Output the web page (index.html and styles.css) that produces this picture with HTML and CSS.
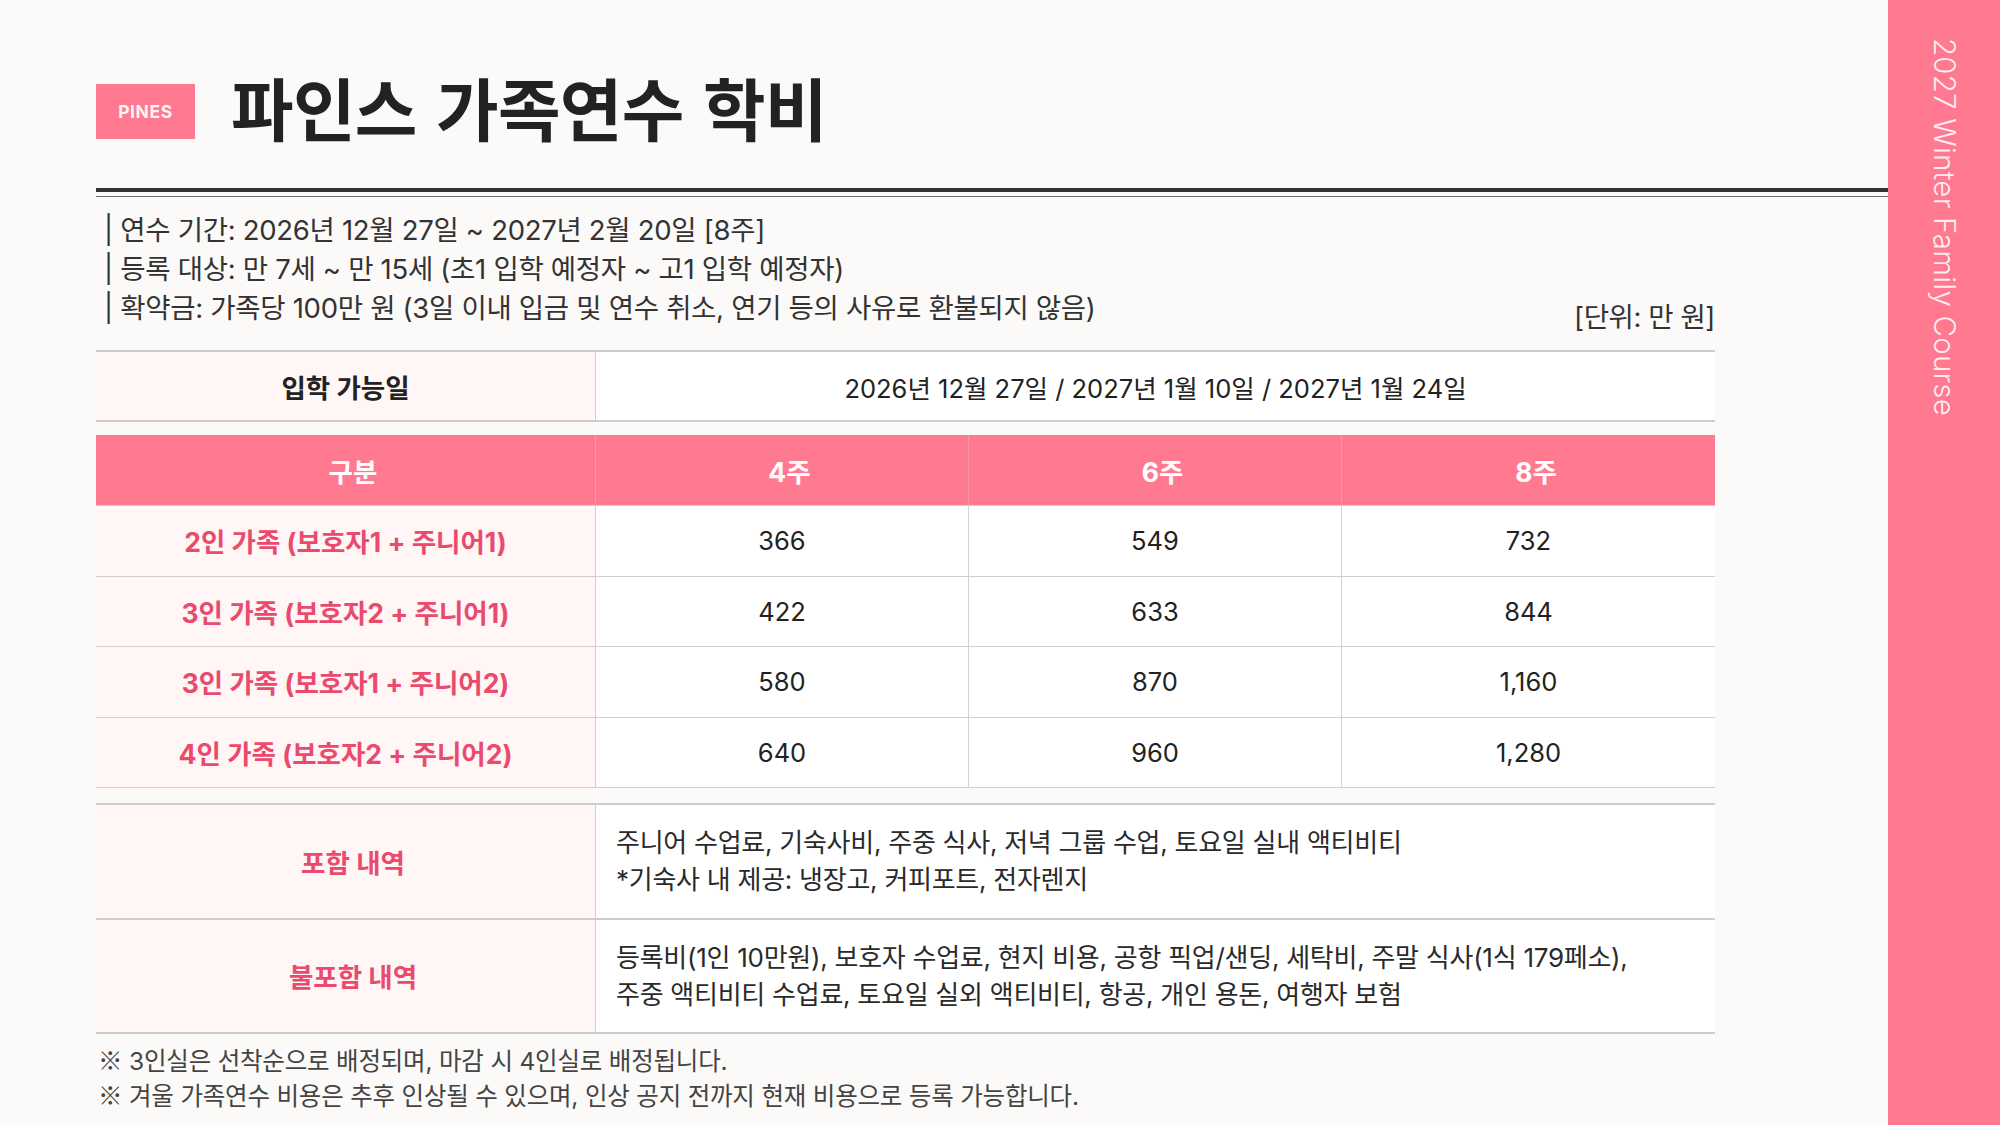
FILE: index.html
```html
<!DOCTYPE html>
<html lang="ko">
<head>
<meta charset="utf-8">
<title>파인스 가족연수 학비</title>
<link rel="stylesheet" href="styles.css">
</head>
<body>
<div class="page">
  <main class="main">
    <header class="head">
      <div class="badge">PINES</div>
      <h1 class="title">파인스 가족연수 학비</h1>
    </header>
    <div class="rule"></div>

    <div class="content">
      <div class="info">
        <ul class="info-list">
          <li>| 연수 기간: 2026년 12월 27일 ~ 2027년 2월 20일 [8주]</li>
          <li>| 등록 대상: 만 7세 ~ 만 15세 (초1 입학 예정자 ~ 고1 입학 예정자)</li>
          <li>| 확약금: 가족당 100만 원 (3일 이내 입금 및 연수 취소, 연기 등의 사유로 환불되지 않음)</li>
        </ul>
        <div class="unit">[단위: 만 원]</div>
      </div>

      <div class="tbl tbl-date">
        <div class="cell label dark">입학 가능일</div>
        <div class="cell val">2026년 12월 27일 / 2027년 1월 10일 / 2027년 1월 24일</div>
      </div>

      <div class="tbl tbl-price">
        <div class="cell th">구분</div>
        <div class="cell th">4주</div>
        <div class="cell th">6주</div>
        <div class="cell th">8주</div>

        <div class="cell label">2인 가족 (보호자1 + 주니어1)</div>
        <div class="cell num">366</div>
        <div class="cell num">549</div>
        <div class="cell num">732</div>

        <div class="cell label">3인 가족 (보호자2 + 주니어1)</div>
        <div class="cell num">422</div>
        <div class="cell num">633</div>
        <div class="cell num">844</div>

        <div class="cell label">3인 가족 (보호자1 + 주니어2)</div>
        <div class="cell num">580</div>
        <div class="cell num">870</div>
        <div class="cell num">1,160</div>

        <div class="cell label">4인 가족 (보호자2 + 주니어2)</div>
        <div class="cell num">640</div>
        <div class="cell num">960</div>
        <div class="cell num">1,280</div>
      </div>

      <div class="tbl tbl-incl">
        <div class="cell label">포함 내역</div>
        <div class="cell text">주니어 수업료, 기숙사비, 주중 식사, 저녁 그룹 수업, 토요일 실내 액티비티<br>*기숙사 내 제공: 냉장고, 커피포트, 전자렌지</div>
        <div class="cell label">불포함 내역</div>
        <div class="cell text">등록비(1인 10만원), 보호자 수업료, 현지 비용, 공항 픽업/샌딩, 세탁비, 주말 식사(1식 179페소),<br>주중 액티비티 수업료, 토요일 실외 액티비티, 항공, 개인 용돈, 여행자 보험</div>
      </div>

      <div class="notes">
        <p><span class="mark">※</span> 3인실은 선착순으로 배정되며, 마감 시 4인실로 배정됩니다.</p>
        <p><span class="mark">※</span> 겨울 가족연수 비용은 추후 인상될 수 있으며, 인상 공지 전까지 현재 비용으로 등록 가능합니다.</p>
      </div>
    </div>
  </main>

  <aside class="side">
    <span class="side-text">2027 Winter Family Course</span>
  </aside>
</div>
</body>
</html>
```

FILE: styles.css
```css
* {
  box-sizing: border-box;
}

html, body {
  margin: 0;
  padding: 0;
}

body {
  width: 2000px;
  height: 1125px;
  overflow: hidden;
  background: #fbfaf8;
  font-family: Inter, "Noto Sans CJK KR", sans-serif;
  color: #2a2a2a;
}

.page {
  display: flex;
  width: 2000px;
  height: 1125px;
}

.main {
  flex: 1;
  padding-left: 96px;
  min-width: 0;
}

/* header */
.head {
  display: flex;
  align-items: center;
  height: 56px;
  margin-top: 83px;
}

.badge {
  width: 99px;
  height: 55px;
  background: #ff7990;
  color: #fff4f6;
  font-family: Inter, sans-serif;
  font-weight: 700;
  font-size: 17.5px;
  letter-spacing: 0.6px;
  display: flex;
  align-items: center;
  justify-content: center;
}

.title {
  margin: 0 0 0 36px;
  font-family: Inter, "Noto Sans CJK KR", sans-serif;
  font-weight: 700;
  font-size: 68px;
  letter-spacing: -0.01em;
  word-spacing: 4px;
  line-height: 1;
  color: #222;
}

.rule {
  margin-top: 49px;
  height: 9px;
  border-top: 4px solid #333;
  border-bottom: 1.5px solid #6a6a6a;
}

/* content */
.content {
  width: 1619px;
}

.info {
  display: flex;
  justify-content: space-between;
  align-items: flex-end;
  margin-top: 14px;
}

.info-list {
  list-style: none;
  margin: 0;
  padding: 0 0 0 8px;
  font-size: 27.5px;
  line-height: 39px;
  color: #333;
  letter-spacing: -0.011em;
}

.unit {
  font-size: 27.5px;
  line-height: 22px;
  color: #333;
  letter-spacing: -0.015em;
}

.tbl {
  display: grid;
  background: #fff;
}

.cell {
  display: flex;
  align-items: center;
  justify-content: center;
  font-size: 25.5px;
  color: #222;
}

.label {
  background: #fff6f5;
  color: #ea4a6e;
  font-weight: 700;
  font-size: 26.5px;
  border-right: 1px solid #cfcfcf;
}

.label.dark {
  color: #222;
}

.tbl-date {
  margin-top: 22px;
  grid-template-columns: 500px 1fr;
  height: 72px;
  border-top: 2px solid #cdcdcd;
  border-bottom: 2px solid #cdcdcd;
}

.tbl-price {
  margin-top: 13px;
  grid-template-columns: 500px 373px 373px 1fr;
  grid-template-rows: 71px repeat(4, 70.5px);
}

.tbl-price .cell {
  border-bottom: 1.5px solid #cfcfcf;
}

.tbl-price .num {
  border-right: 1px solid #d2d2d2;
}

.tbl-price .num:nth-child(4n) {
  border-right: 0;
}

.th {
  background: #ff7990;
  color: #fff;
  font-weight: 700;
  font-size: 26.5px;
  padding-left: 15px;
  border-right: 1px solid #f59aab;
}

.th:nth-child(4) {
  border-right: 0;
}

.tbl-incl {
  margin-top: 15px;
  grid-template-columns: 500px 1fr;
  grid-template-rows: 114.5px 114.5px;
  border-top: 2px solid #cdcdcd;
}

.tbl-incl .cell {
  border-bottom: 2px solid #cdcdcd;
}

.tbl-incl .label {
  padding-left: 15px;
}

.tbl-incl .text {
  justify-content: flex-start;
  padding-left: 20px;
  font-size: 26px;
  line-height: 37px;
  letter-spacing: -0.01em;
  color: #2a2a2a;
}

.notes {
  margin-top: 9px;
  padding-left: 2px;
  font-size: 24.5px;
  line-height: 34px;
  color: #444;
  letter-spacing: -0.008em;
}

.notes p {
  margin: 0;
}

.mark {
  font-family: "Noto Sans CJK KR", sans-serif;
}

/* side strip */
.side {
  width: 112px;
  flex: none;
  background: #ff7990;
  display: flex;
  justify-content: center;
  padding-top: 38px;
}

.side-text {
  writing-mode: vertical-rl;
  font-family: Inter, sans-serif;
  font-weight: 300;
  font-size: 29.5px;
  color: rgba(255, 255, 255, 0.88);
  letter-spacing: 0.2px;
  line-height: 1;
}
```
